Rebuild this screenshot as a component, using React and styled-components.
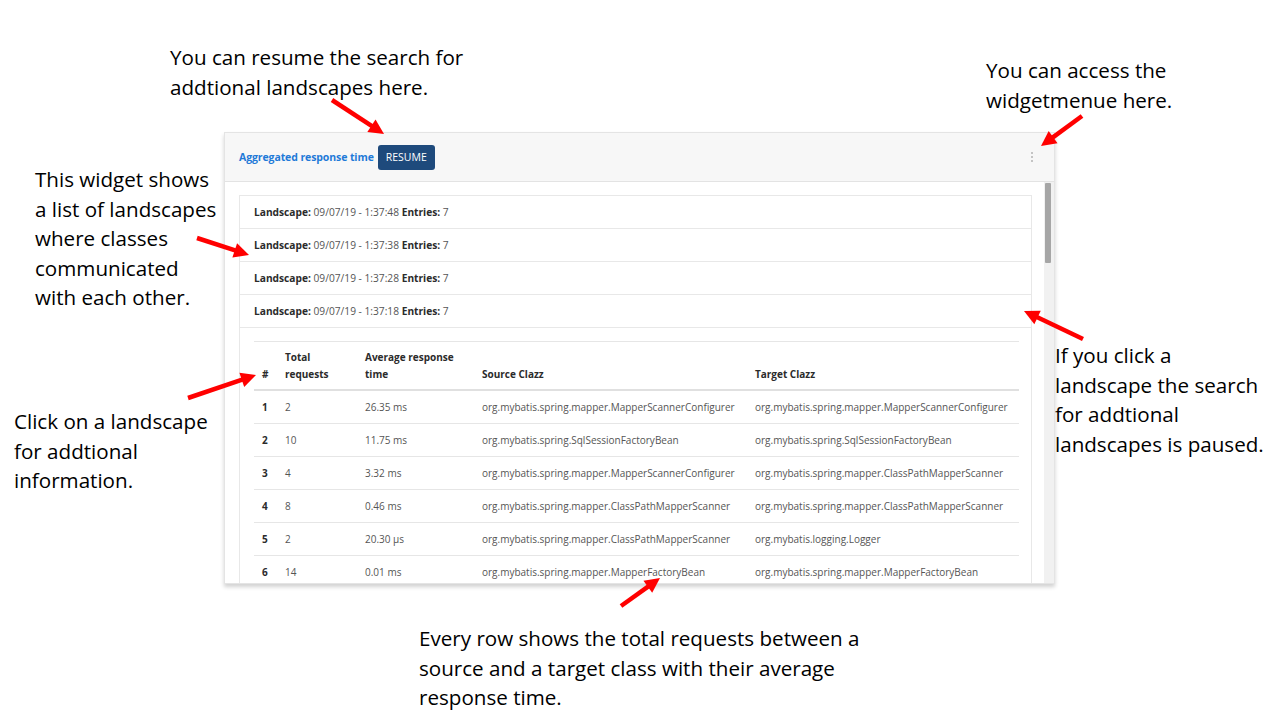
import React from "react";
import styled, { createGlobalStyle } from "styled-components";

const GlobalStyle = createGlobalStyle`
  html, body {
    margin: 0;
    padding: 0;
    background: #ffffff;
  }
`;

const Slide = styled.div`
  position: relative;
  width: 1280px;
  height: 720px;
  overflow: hidden;
  background: #ffffff;
`;

const Callout = styled.div`
  position: absolute;
  left: ${props => props.x}px;
  top: ${props => props.y}px;
  font-family: "Open Sans", "Noto Sans", sans-serif;
  font-size: 20.6px;
  line-height: 29.5px;
  color: #000;
  white-space: nowrap;
`;

const Arrows = styled.svg`
  position: absolute;
  left: 0;
  top: 0;
  pointer-events: none;
  z-index: 5;
`;

const Widget = styled.div`
  position: absolute;
  left: 224px;
  top: 132px;
  width: 831px;
  height: 452px;
  display: flex;
  flex-direction: column;
  background: #fff;
  border: 1px solid #e4e4e4;
  box-sizing: border-box;
  box-shadow: 0 3px 4px rgba(0, 0, 0, 0.18);
  font-family: "Open Sans", "Noto Sans", sans-serif;
`;

const WidgetHeader = styled.div`
  height: 48px;
  flex: none;
  display: flex;
  align-items: center;
  padding: 0 21px 0 14px;
  background: #f7f7f7;
  border-bottom: 1px solid #e3e3e3;
`;

const Title = styled.span`
  color: #1f7ad8;
  font-weight: 700;
  font-size: 10.5px;
  letter-spacing: -0.1px;
`;

const ResumeButton = styled.button`
  margin-left: 4px;
  height: 25px;
  padding: 0 8px;
  border: none;
  border-radius: 3px;
  background: #1e4a7c;
  color: #fff;
  font-family: inherit;
  font-size: 10.5px;
`;

const MenuDots = styled.div`
  margin-left: auto;
  display: flex;
  flex-direction: column;
  gap: 2px;
  span {
    width: 2px;
    height: 2px;
    border-radius: 50%;
    background: #b3b3b3;
  }
`;

const WidgetBody = styled.div`
  flex: 1;
  display: flex;
  min-height: 0;
`;

const Content = styled.div`
  flex: 1;
  overflow: hidden;
  padding: 13px 12px 0 14px;
`;

const ScrollTrack = styled.div`
  width: 8px;
  flex: none;
  background: #f1f1f1;
  padding: 1px 1px;
`;

const ScrollThumb = styled.div`
  width: 6px;
  height: 80px;
  border-radius: 1px;
  background: #a6a6a6;
`;

const List = styled.div`
  border: 1px solid #e8e8e8;
  border-bottom: none;
`;

const ListItem = styled.div`
  height: 32px;
  display: flex;
  align-items: center;
  padding-left: 14px;
  border-bottom: 1px solid #e8e8e8;
  font-size: 10.2px;
  color: #555;
  b {
    color: #2b2b2b;
    font-weight: 700;
  }
`;

const Detail = styled.div`
  padding: 13px 12px 20px 14px;
`;

const Table = styled.table`
  width: 100%;
  border-collapse: collapse;
  table-layout: fixed;
  font-size: 10px;
  color: #555;
  border-top: 1px solid #e6e6e6;
`;

const Th = styled.th`
  box-sizing: border-box;
  width: ${props => props.w || "auto"};
  text-align: left;
  vertical-align: bottom;
  font-weight: 700;
  color: #2b2b2b;
  line-height: 17px;
  padding: 7px 5px 6px ${props => props.pl || 5}px;
  border-bottom: 2px solid #e0e0e0;
`;

const Td = styled.td`
  height: 32px;
  padding: 0 5px 0 ${props => props.pl || 5}px;
  border-top: 1px solid #e6e6e6;
  white-space: nowrap;
  ${props => props.strong && "font-weight: 700; color: #2b2b2b;"}
`;

const landscapes = ["1:37:48", "1:37:38", "1:37:28", "1:37:18"];

const rows = [
  [2, "26.35 ms", "org.mybatis.spring.mapper.MapperScannerConfigurer", "org.mybatis.spring.mapper.MapperScannerConfigurer"],
  [10, "11.75 ms", "org.mybatis.spring.SqlSessionFactoryBean", "org.mybatis.spring.SqlSessionFactoryBean"],
  [4, "3.32 ms", "org.mybatis.spring.mapper.MapperScannerConfigurer", "org.mybatis.spring.mapper.ClassPathMapperScanner"],
  [8, "0.46 ms", "org.mybatis.spring.mapper.ClassPathMapperScanner", "org.mybatis.spring.mapper.ClassPathMapperScanner"],
  [2, "20.30 µs", "org.mybatis.spring.mapper.ClassPathMapperScanner", "org.mybatis.logging.Logger"],
  [14, "0.01 ms", "org.mybatis.spring.mapper.MapperFactoryBean", "org.mybatis.spring.mapper.MapperFactoryBean"]
];

// tail -> tip
const arrows = [
  [332, 100, 384, 134],
  [1082, 116, 1041, 146],
  [197, 238, 249, 255],
  [188, 398, 256, 375],
  [1083, 339, 1024, 311],
  [621, 606, 660, 578]
];

const Arrow = ({ x1, y1, x2, y2 }) => {
  const dx = x2 - x1;
  const dy = y2 - y1;
  const len = Math.sqrt(dx * dx + dy * dy);
  const ux = dx / len;
  const uy = dy / len;
  const head = 15;
  const half = 7.5;
  const bx = x2 - ux * head;
  const by = y2 - uy * head;
  const pts = [
    `${x2},${y2}`,
    `${bx - uy * half},${by + ux * half}`,
    `${bx + uy * half},${by - ux * half}`
  ].join(" ");
  return (
    <g>
      <line x1={x1} y1={y1} x2={bx + ux * 2} y2={by + uy * 2} stroke="#ff0000" strokeWidth="4.5" />
      <polygon points={pts} fill="#ff0000" />
    </g>
  );
};

export default function App() {
  return (
    <>
      <GlobalStyle />
      <Slide>
        <Callout x={170} y={43}>
          You can resume the search for<br />addtional landscapes here.
        </Callout>
        <Callout x={986} y={56}>
          You can access the<br />widgetmenue here.
        </Callout>
        <Callout x={35} y={165}>
          This widget shows<br />a list of landscapes<br />where classes<br />communicated<br />with each other.
        </Callout>
        <Callout x={14} y={407}>
          Click on a landscape<br />for addtional<br />information.
        </Callout>
        <Callout x={1055} y={341}>
          If you click a<br />landscape the search<br />for addtional<br />landscapes is paused.
        </Callout>
        <Callout x={419} y={624}>
          Every row shows the total requests between a<br />source and a target class with their average<br />response time.
        </Callout>

        <Widget>
          <WidgetHeader>
            <Title>Aggregated response time</Title>
            <ResumeButton>RESUME</ResumeButton>
            <MenuDots>
              <span />
              <span />
              <span />
            </MenuDots>
          </WidgetHeader>
          <WidgetBody>
            <Content>
              <List>
                {landscapes.map(t => (
                  <ListItem key={t}>
                    <b>Landscape:</b>&nbsp;09/07/19 - {t}&nbsp;<b>Entries:</b>&nbsp;7
                  </ListItem>
                ))}
                <Detail>
                  <Table>
                    <thead>
                      <tr>
                        <Th w="26px" pl={8}>#</Th>
                        <Th w="80px">Total<br />requests</Th>
                        <Th w="117px">Average response<br />time</Th>
                        <Th w="273px">Source Clazz</Th>
                        <Th>Target Clazz</Th>
                      </tr>
                    </thead>
                    <tbody>
                      {rows.map((r, i) => (
                        <tr key={i}>
                          <Td strong pl={8}>{i + 1}</Td>
                          <Td>{r[0]}</Td>
                          <Td>{r[1]}</Td>
                          <Td>{r[2]}</Td>
                          <Td>{r[3]}</Td>
                        </tr>
                      ))}
                    </tbody>
                  </Table>
                </Detail>
              </List>
            </Content>
            <ScrollTrack>
              <ScrollThumb />
            </ScrollTrack>
          </WidgetBody>
        </Widget>

        <Arrows width="1280" height="720" viewBox="0 0 1280 720">
          {arrows.map((a, i) => (
            <Arrow key={i} x1={a[0]} y1={a[1]} x2={a[2]} y2={a[3]} />
          ))}
        </Arrows>
      </Slide>
    </>
  );
}
